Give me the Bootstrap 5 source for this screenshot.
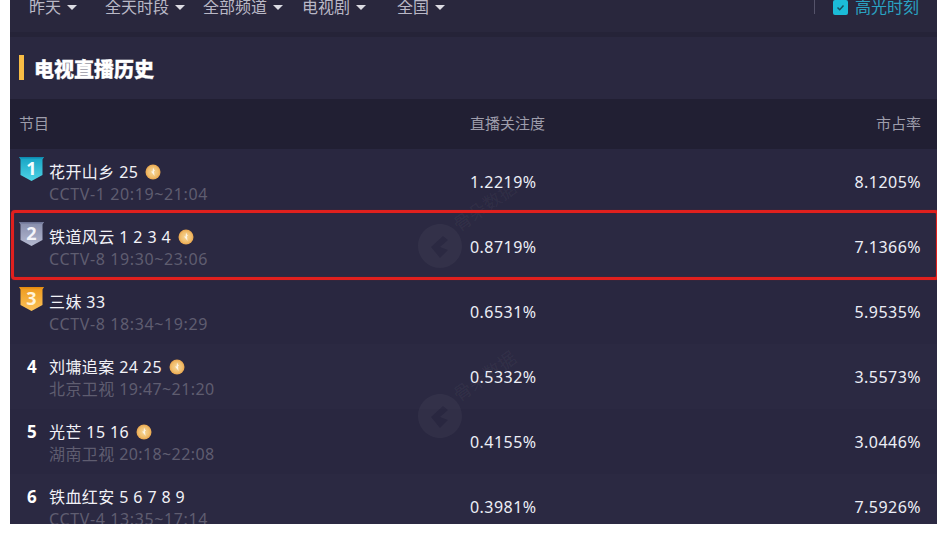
<!doctype html>
<html lang="zh"><head><meta charset="utf-8">
<title>电视直播历史</title>
<link href="https://cdn.jsdelivr.net/npm/bootstrap@5.3.0/dist/css/bootstrap.min.css" rel="stylesheet">
<style>
html,body{height:100%;background:#fff}
body{font-family:"Noto Sans","Noto Sans CJK SC",sans-serif;font-size:16px;color:#e8e8f0;overflow:hidden}
.pane{width:927px;height:524px;margin-left:10px;background:#2a2840;overflow:hidden;position:relative}
.filters{height:32px;background:#29273d}
.filters-in{height:14px;line-height:14px;color:#b9b8c6;padding-left:19px}
.fil{display:inline-block;white-space:nowrap}
.fil.dropdown-toggle::after{margin-left:6px;vertical-align:.2em;border-top:.36em solid #dcdce4;border-right:.32em solid transparent;border-left:.32em solid transparent}
.f1{width:76px}.f2{width:98px}.f3{width:99px}.f4{width:95px}
.hl{color:#2aa2c2;padding-right:18px}
.hl-sep{width:1px;height:16px;background:#55536a;margin-right:18px;margin-top:-2px}
.hl-box{width:15px;height:15px;border-radius:2px;background:#1bbcd8;margin-right:7px}
.strip{height:5px;background:#252338}
.heading{height:62px;padding-left:9px;background:#2a2840}
.heading-bar{width:5px;height:25px;background:#f8bd45;margin-right:11px;margin-top:-1px}
.heading-txt{font-size:20px;font-weight:900;color:#fff;line-height:1;margin-top:3px;margin-left:-1px;-webkit-text-stroke:.3px #fff}
.thead-row,.trow{display:grid;grid-template-columns:451px 1fr 1fr;padding:0 16px 0 9px}
.thead-row{height:50px;background:#211f33;color:#9e9dab;font-size:15px;padding-right:16px}
.thead-row span{margin-top:-1px}
.trow{height:65px;background:#292740}
.trow.alt{background:#2b2942}
.rank{width:30px;flex:none;margin-top:-5px}
.rank-n{padding-left:8px;font-weight:700;font-size:17px;color:#fff;line-height:1;margin-top:2px}
.showbox{margin-top:2px}
.show-name{color:#f2f2f7;line-height:22px;font-size:16px;letter-spacing:.4px}
.show-sub{color:#5f5d70;line-height:22px;font-size:16px;letter-spacing:.4px}
.show-sub.wide{letter-spacing:.62px}
.coin{margin-left:2px;vertical-align:-2px}
.val{font-size:16px;color:#eceef6;letter-spacing:.45px}
.wmark{position:absolute;pointer-events:none}
.wmark-a{left:407px;top:223px}
.wmark-b{left:407px;top:393px}
.wmark-t{position:absolute;left:46px;top:-12px;transform:rotate(-35deg);transform-origin:left bottom;font-size:18px;color:rgba(255,255,255,.05);white-space:nowrap}
.redbox{position:absolute;left:1px;top:210px;width:928px;height:70px;border:3px solid #e0201e;border-radius:4px;box-shadow:0 0 1px #8f2030,inset 0 0 1px #8f2030;pointer-events:none}
</style></head>
<body>
<svg width="0" height="0" class="position-absolute">
<defs>
<radialGradient id="gc"><stop offset="0" stop-color="#f6d79a"/><stop offset=".7" stop-color="#f0bd6c"/><stop offset="1" stop-color="#e9a54c"/></radialGradient>
<linearGradient id="m1" x1="0" y1="0" x2="0" y2="1"><stop offset="0" stop-color="#16a3c4"/><stop offset="1" stop-color="#4fd4e6"/></linearGradient>
<linearGradient id="m2" x1="0" y1="0" x2="0" y2="1"><stop offset="0" stop-color="#868cab"/><stop offset="1" stop-color="#b4b9d0"/></linearGradient>
<linearGradient id="m3" x1="0" y1="0" x2="0" y2="1"><stop offset="0" stop-color="#ef9a1c"/><stop offset="1" stop-color="#fbc25a"/></linearGradient>
<symbol id="coin" viewBox="0 0 16 16"><circle cx="8" cy="8" r="7.5" fill="url(#gc)"/><path d="M8 3.500 10 7H8.900L9.600 12 6 7.600H7.600Z" fill="#fff" opacity=".75"/></symbol>
</defs></svg>
<div class="pane">
  <div class="filters">
    <div class="filters-in d-flex align-items-center">
      <span class="fil f1 dropdown-toggle">昨天</span>
      <span class="fil f2 dropdown-toggle">全天时段</span>
      <span class="fil f3 dropdown-toggle">全部频道</span>
      <span class="fil f4 dropdown-toggle">电视剧</span>
      <span class="fil dropdown-toggle">全国</span>
      <div class="ms-auto d-flex align-items-center hl">
        <span class="hl-sep"></span>
        <span class="hl-box d-flex align-items-center justify-content-center"><svg width="11" height="11" viewBox="0 0 11 11"><path d="M2.500 5.500 4.700 7.700 8.500 3.500" fill="none" stroke="#17505f" stroke-width="1.500"/></svg></span>
        <span>高光时刻</span>
      </div>
    </div>
  </div>
  <div class="strip"></div>
  <div class="heading d-flex align-items-center"><span class="heading-bar"></span><span class="heading-txt">电视直播历史</span></div>
  <div class="thead-row align-items-center"><span>节目</span><span>直播关注度</span><span class="text-end">市占率</span></div>

  <div class="trow align-items-center">
    <div class="d-flex align-items-center showbox">
      <div class="rank align-self-start"><svg width="25" height="26" viewBox="0 0 25 26"><path d="M0 1h25l-1.500 2.500V19L12.500 25 1.500 19V3.500Z" fill="url(#m1)"/><path d="M1 1h23l-.5 1.500h-22Z" fill="#0f8bb0"/><text x="12.500" y="18.500" text-anchor="middle" font-family="Noto Sans" font-weight="700" font-size="18" fill="#f2fdff">1</text></svg></div>
      <div><div class="show-name">花开山乡 25 <svg class="coin" width="16" height="16"><use href="#coin"/></svg></div><div class="show-sub wide">CCTV-1 20:19~21:04</div></div>
    </div>
    <span class="val">1.2219%</span><span class="val text-end">8.1205%</span>
  </div>
  <div class="trow alt align-items-center">
    <div class="d-flex align-items-center showbox">
      <div class="rank align-self-start"><svg width="25" height="26" viewBox="0 0 25 26"><path d="M0 1h25l-1.500 2.500V19L12.500 25 1.500 19V3.500Z" fill="url(#m2)"/><path d="M1 1h23l-.5 1.500h-22Z" fill="#6d7395"/><text x="12.500" y="18.500" text-anchor="middle" font-family="Noto Sans" font-weight="700" font-size="18" fill="#f4f5fa">2</text></svg></div>
      <div><div class="show-name">铁道风云 1 2 3 4 <svg class="coin" width="16" height="16"><use href="#coin"/></svg></div><div class="show-sub wide">CCTV-8 19:30~23:06</div></div>
    </div>
    <span class="val">0.8719%</span><span class="val text-end">7.1366%</span>
  </div>
  <div class="trow align-items-center">
    <div class="d-flex align-items-center showbox">
      <div class="rank align-self-start"><svg width="25" height="26" viewBox="0 0 25 26"><path d="M0 1h25l-1.500 2.500V19L12.500 25 1.500 19V3.500Z" fill="url(#m3)"/><path d="M1 1h23l-.5 1.500h-22Z" fill="#e58c10"/><text x="12.500" y="18.500" text-anchor="middle" font-family="Noto Sans" font-weight="700" font-size="18" fill="#fff3d8">3</text></svg></div>
      <div><div class="show-name">三妹 33</div><div class="show-sub wide">CCTV-8 18:34~19:29</div></div>
    </div>
    <span class="val">0.6531%</span><span class="val text-end">5.9535%</span>
  </div>
  <div class="trow alt align-items-center">
    <div class="d-flex align-items-center showbox">
      <div class="rank align-self-start rank-n">4</div>
      <div><div class="show-name">刘墉追案 24 25 <svg class="coin" width="16" height="16"><use href="#coin"/></svg></div><div class="show-sub">北京卫视 19:47~21:20</div></div>
    </div>
    <span class="val">0.5332%</span><span class="val text-end">3.5573%</span>
  </div>
  <div class="trow align-items-center">
    <div class="d-flex align-items-center showbox">
      <div class="rank align-self-start rank-n">5</div>
      <div><div class="show-name">光芒 15 16 <svg class="coin" width="16" height="16"><use href="#coin"/></svg></div><div class="show-sub">湖南卫视 20:18~22:08</div></div>
    </div>
    <span class="val">0.4155%</span><span class="val text-end">3.0446%</span>
  </div>
  <div class="trow alt align-items-center">
    <div class="d-flex align-items-center showbox">
      <div class="rank align-self-start rank-n">6</div>
      <div><div class="show-name">铁血红安 5 6 7 8 9</div><div class="show-sub wide">CCTV-4 13:35~17:14</div></div>
    </div>
    <span class="val">0.3981%</span><span class="val text-end">7.5926%</span>
  </div>

  <div class="wmark wmark-a"><svg width="46" height="46" viewBox="0 0 46 46"><path fill-rule="evenodd" d="M23 1C35 1 45 11 45 23S35 45 23 45 1 35 1 23 11 1 23 1ZM14 24 23 35 31 27 23 24 31 17 26 13Z" fill="#fff" opacity=".04"/></svg><span class="wmark-t">骨朵数据</span></div>
  <div class="wmark wmark-b"><svg width="46" height="46" viewBox="0 0 46 46"><path fill-rule="evenodd" d="M23 1C35 1 45 11 45 23S35 45 23 45 1 35 1 23 11 1 23 1ZM14 24 23 35 31 27 23 24 31 17 26 13Z" fill="#fff" opacity=".04"/></svg><span class="wmark-t">骨朵数据</span></div>
  <div class="redbox"></div>
</div>
</body></html>
